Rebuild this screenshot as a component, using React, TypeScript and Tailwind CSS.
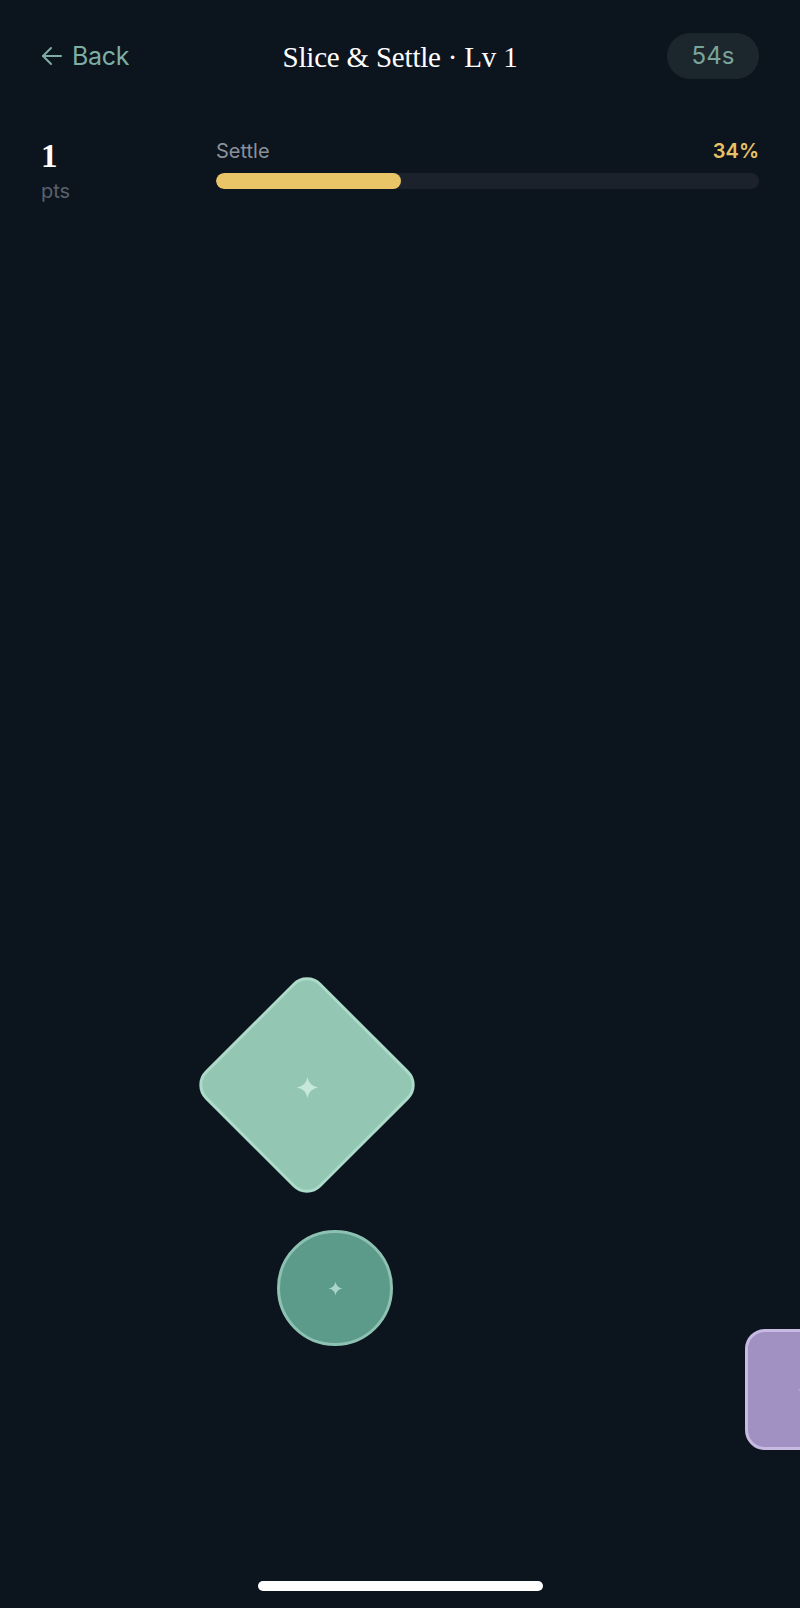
import React from "react";

function Sparkle({ size, color }: { size: number; color: string }) {
  return (
    <svg width={size} height={size} viewBox="0 0 24 24" className="block">
      <path
        d="M12 1 Q13.6 10.4 23 12 Q13.6 13.6 12 23 Q10.4 13.6 1 12 Q10.4 10.4 12 1 Z"
        fill={color}
      />
    </svg>
  );
}

export default function App() {
  return (
    <div className="relative w-[800px] h-[1608px] overflow-hidden bg-[#0c141d] font-['Inter','Liberation_Sans',sans-serif]">
      {/* Header */}
      <div className="grid grid-cols-[1fr_auto_1fr] items-center px-[41px] pt-[33px] h-[79px]">
        <div className="flex items-center gap-[9px] text-[#7eaea3] text-[25px] leading-none">
          <svg width="22" height="20" viewBox="0 0 22 20" fill="none" stroke="currentColor" strokeWidth="2" strokeLinecap="round" strokeLinejoin="round">
            <path d="M20 10 H2" />
            <path d="M10 2 L2 10 L10 18" />
          </svg>
          <span className="tracking-[-0.3px]">Back</span>
        </div>
        <div className="text-white text-[29px] leading-none font-['Liberation_Serif',serif] tracking-[-0.2px] mt-[3px]">
          Slice &amp; Settle · Lv 1
        </div>
        <div className="flex justify-end">
          <div className="h-[46px] w-[92px] rounded-full bg-[#1c262d] flex items-center justify-center text-[#7aa39a] text-[24px] leading-none">
            54s
          </div>
        </div>
      </div>

      {/* Stats row */}
      <div className="flex px-[41px] mt-[63px]">
        <div className="w-[175px] flex flex-col">
          <div className="text-white text-[33px] leading-none font-bold font-['Liberation_Serif',serif] -mt-[2px]">1</div>
          <div className="text-[#5a626d] text-[20px] leading-none mt-[8px]">pts</div>
        </div>
        <div className="flex-1 flex flex-col">
          <div className="flex justify-between items-center h-[20px] -mt-[1px]">
            <span className="text-[#8a919b] text-[20px] leading-none">Settle</span>
            <span className="text-[#e8c264] text-[20px] leading-none font-semibold">34%</span>
          </div>
          <div className="mt-[12px] h-[16px] rounded-full bg-[#1c222b] overflow-hidden">
            <div className="h-full rounded-full bg-[#eac567]" style={{ width: "34%" }} />
          </div>
        </div>
      </div>

      {/* Game pieces (free canvas) */}
      <div className="absolute left-[225px] top-[1003px] w-[164px] h-[164px] rotate-45 rounded-[20px] bg-[#93c6b3] border-[3px] border-[#acdbc9]" />
      <div className="absolute left-[296px] top-[1076px]">
        <Sparkle size={23} color="#c6e8dc" />
      </div>

      <div className="absolute left-[277px] top-[1230px] w-[116px] h-[116px] rounded-full bg-[#5c9a89] border-[3px] border-[#8dc1b2] flex items-center justify-center">
        <Sparkle size={15} color="#a9d6c8" />
      </div>

      <div className="absolute left-[745px] top-[1329px] w-[121px] h-[121px] rounded-[20px] bg-[#a190c2] border-[3px] border-[#c6b9e2] flex items-center justify-center">
        <Sparkle size={18} color="#cfc3e8" />
      </div>

      {/* Home indicator */}
      <div className="absolute left-[258px] top-[1581px] w-[285px] h-[10px] rounded-full bg-white" />
    </div>
  );
}
